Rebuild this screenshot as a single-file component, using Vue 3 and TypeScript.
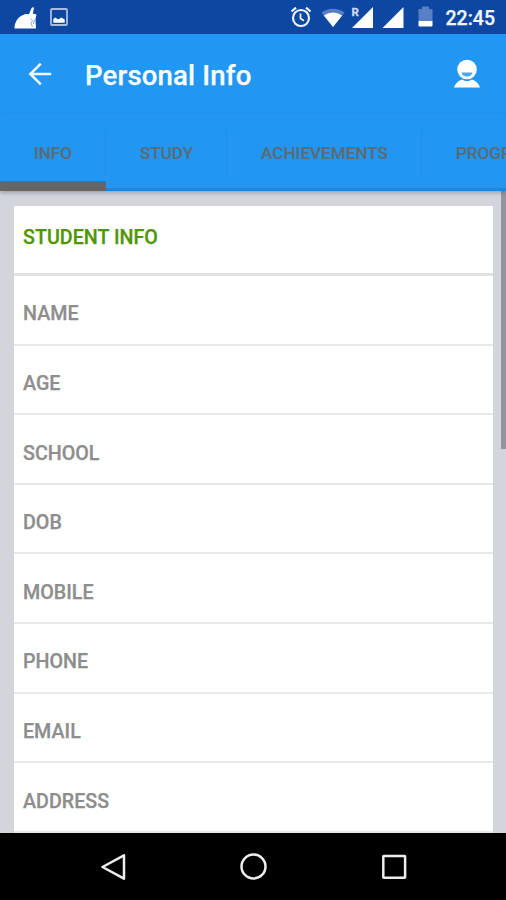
<script setup lang="ts">
interface Tab { label: string; key: string }

const tabs: Tab[] = [
  { label: 'INFO', key: 'info' },
  { label: 'STUDY', key: 'study' },
  { label: 'ACHIEVEMENTS', key: 'achievements' },
  { label: 'PROGRESS', key: 'progress' },
]
const activeTab = 'info'
const fields: string[] = ['NAME', 'AGE', 'SCHOOL', 'DOB', 'MOBILE', 'PHONE', 'EMAIL', 'ADDRESS']
</script>

<template>
  <div class="screen">
    <header class="status">
      <svg class="cleaner" width="24" height="24" viewBox="0 0 24 24">
        <path d="M0.500 22.500C.5 17 3 12 8 9.500Q12 7.500 15 8.300L17.300 2.500Q18.500 .3 20 1.700L18.800 7.500L22.500 8.500L21.500 13L22 22.500Z" fill="#fff" />
        <path d="M16.500 13Q20 14 17 17L18.500 21M20.500 13.500L19.500 18" stroke="#8fa8d8" fill="none" />
      </svg>
      <svg class="picture" width="18" height="18" viewBox="0 0 18 18">
        <rect x="1" y="1" width="16" height="16" rx="1" fill="none" stroke="#a9bce0" stroke-width="1.800" />
        <path d="M3.300 14.700V11L5.500 9.500L8 11.500L11.500 9.500L14.700 11.500V14.700Z" fill="#fff" />
      </svg>
      <span class="spacer"></span>
      <svg class="alarm" width="22" height="22" viewBox="0 0 22 22" fill="none" stroke="#eef3fc">
        <circle cx="11" cy="12" r="8" stroke-width="2.200" />
        <path d="M1.500 5.500L6 1.700M20.500 5.500L16 1.700" stroke-width="2.200" />
        <path d="M10.500 7.500V12.500L14 14.800" stroke-width="1.800" />
      </svg>
      <svg class="wifi" width="24" height="20" viewBox="0 0 24 20">
        <path d="M.5 4.500Q12-3 23.500 4.500L12 19Z" fill="#577fc6" />
        <path d="M2.800 7.500Q12 1.500 21.200 7.500L12 19Z" fill="#fff" />
      </svg>
      <svg class="roaming" width="23" height="22" viewBox="0 0 23 22">
        <path d="M22 1V22H1Z" fill="#fff" />
        <path d="M0 0H8.500V9L6.500 12H0Z" fill="#0d47a1" />
        <text x="0.500" y="10" fill="#cfdaf0" stroke="#cfdaf0" stroke-width=".3" font-size="11.500" font-weight="700">R</text>
      </svg>
      <svg class="signal" width="22" height="22" viewBox="0 0 22 22"><path d="M21.500 1V22H.5Z" fill="#fff" /></svg>
      <svg class="battery" width="15" height="21" viewBox="0 0 15 21">
        <path d="M.5 3H4V.5H11V3H14.500V15H.5Z" fill="#577fc6" />
        <path d="M.5 15H14.500V19.500Q14.500 20.500 13.500 20.500H1.500Q.5 20.500 .5 19.500Z" fill="#fff" />
      </svg>
      <span class="clock">22:45</span>
    </header>

    <div class="appbar">
      <svg class="back" width="24" height="24" viewBox="0 0 24 24" fill="none" stroke="#f1f8ff" stroke-width="2.500">
        <path d="M12.800 1.700L2.300 12L12.800 22.300M2.500 12H23.200" />
      </svg>
      <h1 class="title">Personal Info</h1>
      <svg class="person" width="28" height="30" viewBox="0 0 28 30">
        <path d="M1 28.500Q3 22.500 9 20.500Q14 24 19 20.500Q25 22.500 27 28.500Z" fill="#fff" />
        <circle cx="14" cy="10.500" r="9.800" fill="#fff" />
        <path d="M8.500 13.500H19.500Q18.500 17.500 14 17.500Q9.500 17.500 8.500 13.500Z" fill="#4ba8f5" />
      </svg>
    </div>

    <nav class="tabs">
      <div v-for="tab in tabs" :key="tab.key" class="tab" :class="[tab.key, { active: tab.key === activeTab }]">
        <span>{{ tab.label }}</span>
      </div>
    </nav>

    <main class="content">
      <section class="card">
        <h2 class="heading"><span>STUDENT INFO</span></h2>
        <div v-for="field in fields" :key="field" class="row"><span>{{ field }}</span></div>
      </section>
      <div class="scrollbar"></div>
    </main>

    <footer class="navbar">
      <svg width="28" height="28" viewBox="0 0 28 28"><path d="M25 2.300V25.700L3.500 14Z" /></svg>
      <svg width="28" height="28" viewBox="0 0 28 28"><circle cx="13.500" cy="13.500" r="12" /></svg>
      <svg width="28" height="28" viewBox="0 0 28 28"><rect x="3.300" y="3" width="21.800" height="21.800" rx=".5" /></svg>
    </footer>
  </div>
</template>

<style>
body { margin: 0; overflow: hidden; }
</style>

<style scoped>
.screen {
  width: 506px;
  height: 900px;
  display: flex;
  flex-direction: column;
  overflow: hidden;
  font-family: Roboto, "Liberation Sans", sans-serif;
  background: #d2d6dc;
}
svg { display: block; flex: none; }
.status {
  height: 34px;
  flex: none;
  display: flex;
  align-items: flex-start;
  box-sizing: border-box;
  padding: 6px 0 0 14px;
  background: #0d47a1;
  color: #f1f5fc;
}
.picture { margin: 2px 0 0 12px; }
.spacer { flex: 1; }
.alarm { margin: 0 9px 0 0; }
.wifi { margin: 2px 6px 0 0; }
.roaming { margin-right: 8px; }
.signal { margin-right: 14px; }
.battery { margin-right: 13px; }
.clock {
  width: 60.500px;
  padding-top: 1px;
  font-size: 19.500px;
  line-height: 24px;
  font-weight: 500;
  white-space: nowrap;
  -webkit-text-stroke: .25px currentColor;
}
.appbar {
  height: 80px;
  flex: none;
  display: flex;
  align-items: center;
  box-sizing: border-box;
  padding: 0 25px 0 28px;
  background: #2196f3;
}
.title {
  flex: 1;
  margin: 3px 0 0 33px;
  font-size: 27.600px;
  line-height: 36px;
  font-weight: 500;
  letter-spacing: .15px;
  color: #fafdff;
  white-space: nowrap;
  -webkit-text-stroke: .25px currentColor;
}
.tabs {
  height: 77px;
  flex: none;
  display: flex;
  overflow: hidden;
  box-sizing: border-box;
  padding-top: 14px;
  background: #2196f3;
  box-shadow: inset 0 -3px #1e87dd, 0 2px 4px rgba(80, 85, 90, .4);
  z-index: 1;
}
.tab {
  flex: none;
  box-sizing: border-box;
  height: 63px;
  padding-top: 15px;
  text-align: center;
  font-size: 17.100px;
  line-height: 20px;
  font-weight: 500;
  color: #5a6c75;
  background: linear-gradient(#208eea, #208eea) right 2px / 1px 47px no-repeat;
  -webkit-text-stroke: .2px currentColor;
}
.info { width: 106px; }
.study { width: 121px; }
.achievements { width: 195px; }
.progress { width: 154px; }
.tab.active {
  border-bottom: 10.500px solid #666;
}
.content {
  flex: 1;
  min-height: 0;
  display: flex;
  box-sizing: border-box;
  padding: 15px 0 0 14px;
  overflow: hidden;
  position: relative;
}
.card { width: 479px; }
.heading {
  box-sizing: border-box;
  height: 70px;
  margin: 0;
  padding: 20px 9px 0;
  border-bottom: 3px solid #dfe1e3;
  background: #fff;
  font-size: 19.700px;
  line-height: 24px;
  font-weight: 500;
  color: #4f9606;
  -webkit-text-stroke: .25px currentColor;
}
.row {
  box-sizing: border-box;
  height: 69.600px;
  padding: 26.400px 9px 0;
  border-bottom: 2px solid #e7e8eb;
  background: #fff;
  font-size: 19.700px;
  line-height: 24px;
  font-weight: 500;
  color: #8d8d8d;
  -webkit-text-stroke: .25px currentColor;
}
.scrollbar {
  position: absolute;
  right: 0;
  top: 0;
  width: 5px;
  height: 258px;
  background: #92959b;
}
.navbar {
  height: 67px;
  flex: none;
  display: flex;
  align-items: center;
  justify-content: space-between;
  box-sizing: border-box;
  padding: 0 98px 0 99px;
  background: #000;
}
.navbar svg { fill: none; stroke: #eee; stroke-width: 2.500; stroke-linejoin: round; }
</style>
